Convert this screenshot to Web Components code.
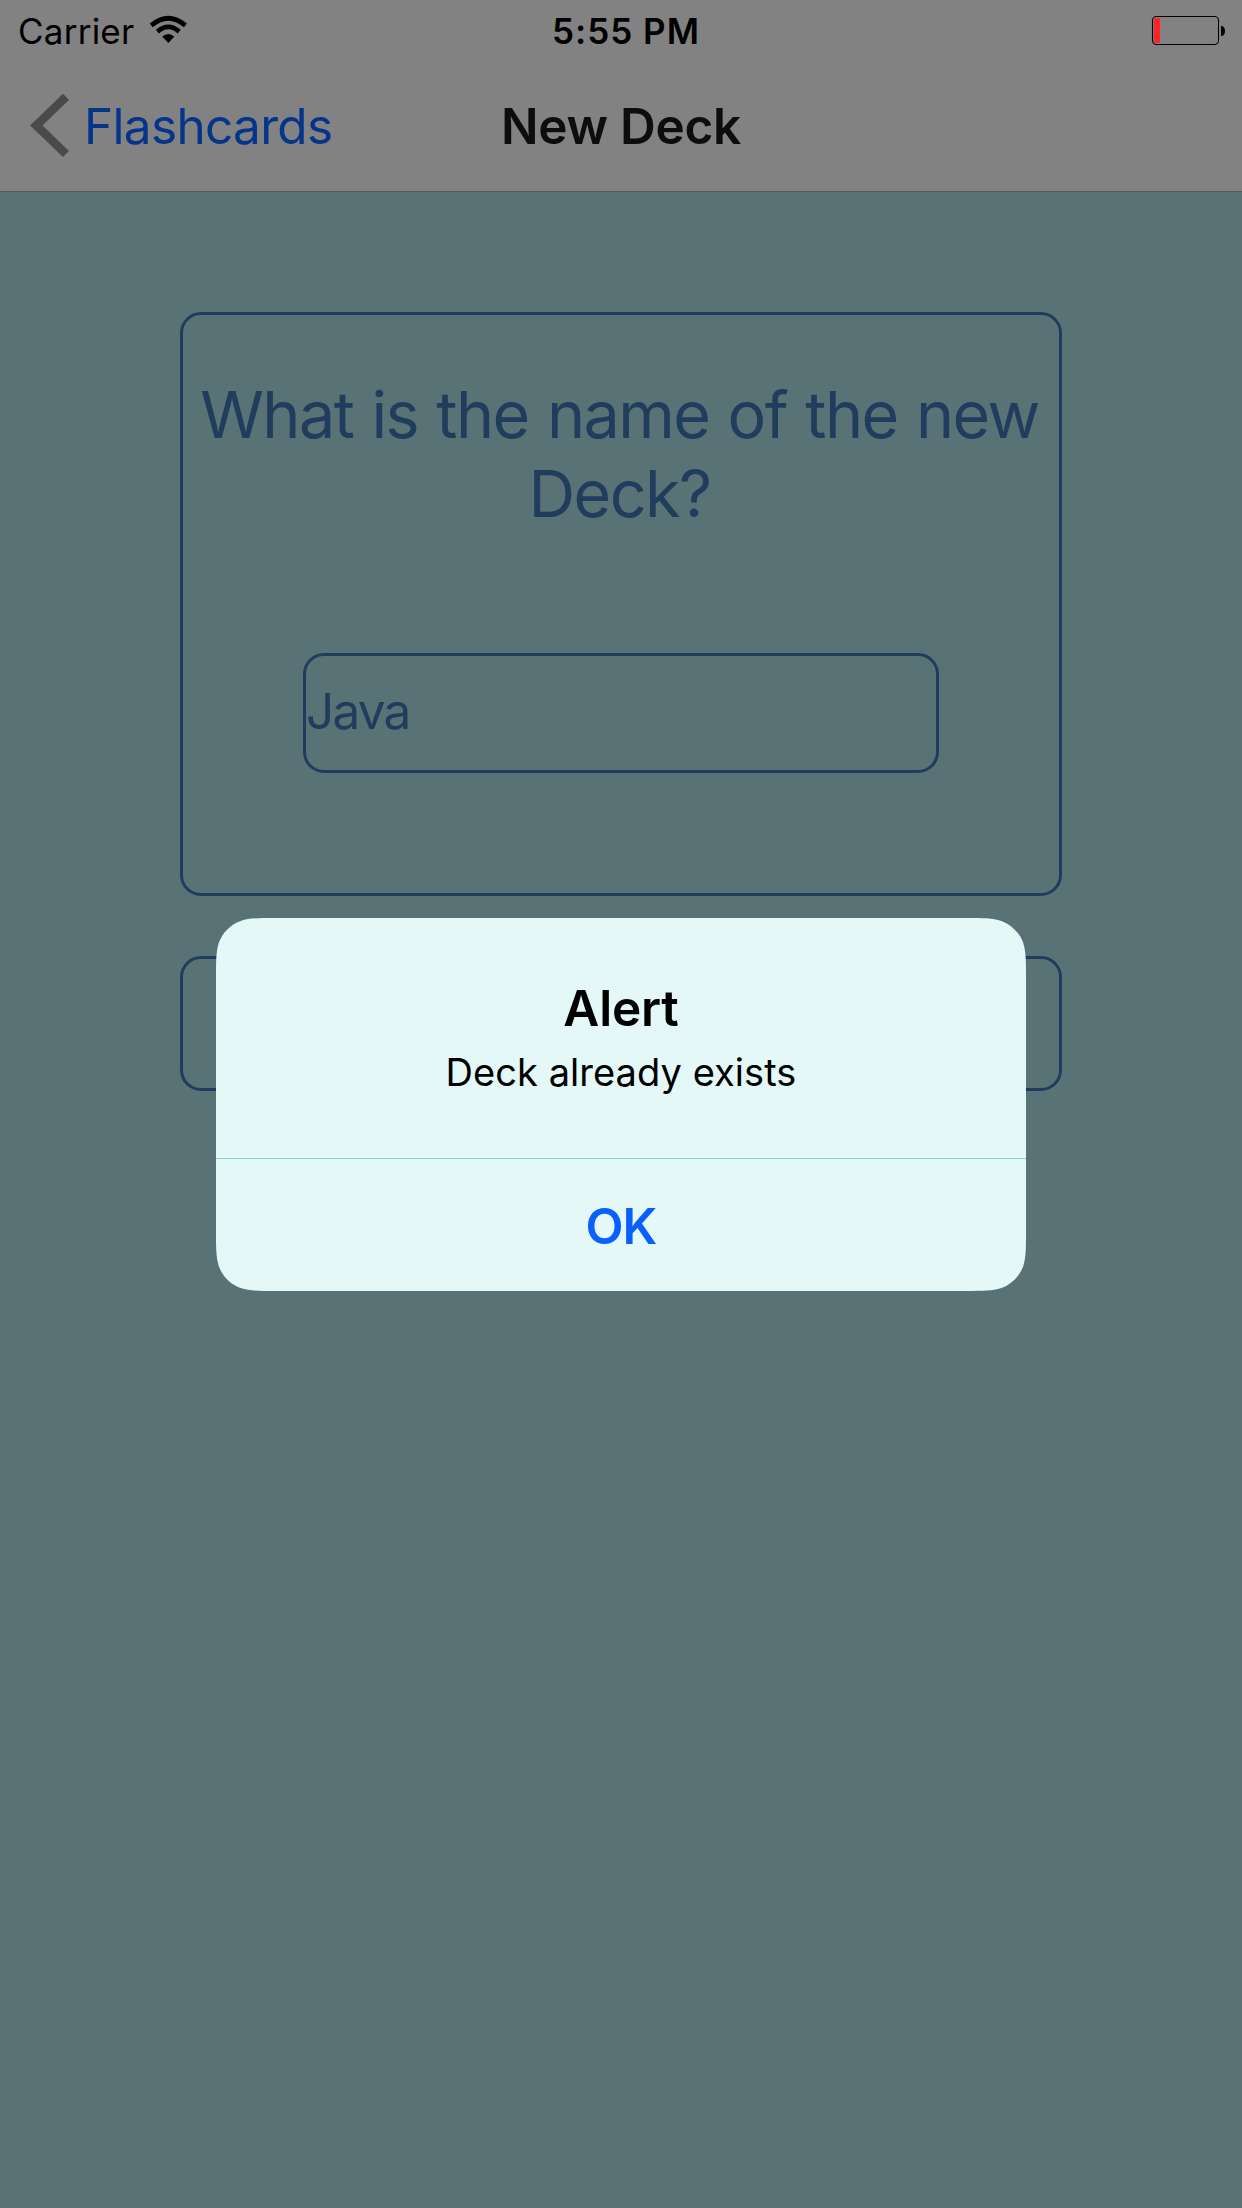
<!DOCTYPE html>
<html lang="en">
<head>
<meta charset="utf-8">
<title>New Deck</title>
<style>
html,body{margin:0;height:100%}
body{font-family:Inter,"Liberation Sans",sans-serif;background:#587276;overflow:hidden}
</style>
</head>
<body>
<flash-app>
  <status-bar slot="top" carrier="Carrier" time="5:55 PM"></status-bar>
  <nav-bar slot="top" back="Flashcards">New Deck</nav-bar>
  <deck-card>What is the name of the new Deck?<deck-input slot="field">Java</deck-input></deck-card>
  <submit-box></submit-box>
  <alert-dialog slot="overlay" heading="Alert" action="OK">Deck already exists</alert-dialog>
</flash-app>
<script>
const define = (name, html) => customElements.define(name, class extends HTMLElement {
  constructor() {
    super();
    const t = document.createElement('template');
    t.innerHTML = html;
    this.attachShadow({mode: 'open'}).append(t.content.cloneNode(true));
  }
  connectedCallback() {
    this.shadowRoot.querySelectorAll('[data-attr]').forEach(n => {
      n.textContent = this.getAttribute(n.dataset.attr) || '';
    });
  }
});

define('flash-app', `<style>
:host{display:flex;flex-direction:column;width:1242px;height:2208px;position:relative;overflow:hidden}
main{display:flex;flex-direction:column;gap:60px;padding:120px 180px 0}
.overlay{position:absolute;inset:0;display:flex;justify-content:center;align-items:flex-start;padding-top:918px;box-sizing:border-box}
</style><slot name="top"></slot><main><slot></slot></main><div class="overlay"><slot name="overlay"></slot></div>`);

define('status-bar', `<style>
:host{display:grid;grid-template-columns:1fr auto 1fr;height:60px;background:#828282;color:#000;font-size:35px;line-height:42px;white-space:nowrap}
.left{display:flex;gap:15px;padding:10px 0 0 18px}
.carrier{letter-spacing:.24px}
.wifi{margin-top:5px}
.time{font-weight:600;letter-spacing:1px;padding:10px 0 0 10px}
.right{display:flex;justify-content:flex-end;padding:15px 16px 0 0}
svg{display:block}
</style>
<div class="left"><span class="carrier" data-attr="carrier"></span>
<svg class="wifi" width="39" height="30" viewBox="0 0 39 30"><g fill="none" stroke="#000" stroke-width="4.7"><path d="M2.2 10.4Q19.3-3.9 36.4 10.4"/><path d="M8.4 16.6Q19.3 7.2 30.2 16.6"/></g><path d="M13.2 21.6Q19.3 16.4 25.4 21.6L19.3 28Z"/></svg></div>
<div class="time" data-attr="time"></div>
<div class="right"><svg width="75" height="32" viewBox="0 0 75 32"><rect x="1.5" y="1.5" width="66" height="28" rx="4" fill="none" stroke="#000" stroke-width="1.1"/><rect x="3" y="3" width="6" height="25" rx=".8" fill="#ff2326"/><path d="M70 11H71Q74 12 74 16T71 21H70Z"/></svg></div>`);

define('nav-bar', `<style>
:host{display:grid;grid-template-columns:1fr auto 1fr;height:132px;box-sizing:border-box;padding-top:32px;background:#828282;border-bottom:1px solid #5a5a5a;font-size:49.5px;line-height:60px;white-space:nowrap}
.back{display:flex;align-items:flex-start;gap:14px;padding-left:30px;color:#05358b;letter-spacing:-.68px}
svg{display:block;width:40px;height:66px}
.label,.title{padding-top:4px}
.title{font-weight:600;letter-spacing:-.28px;color:#0d0d0d}
</style>
<div class="back"><svg viewBox="0 0 40 66"><path d="M36 4.8 6.3 33.4 36 62" fill="none" stroke="#4a4a4a" stroke-width="8.6"/></svg><span class="label" data-attr="back"></span></div>
<div class="title"><slot></slot></div>`);

define('deck-card', `<style>
:host{display:flex;flex-direction:column;height:584px;box-sizing:border-box;border:3px solid #213d5d;border-radius:21px;padding:60px 0 0;color:#213d5d}
.q{font-size:64.6px;line-height:79px;letter-spacing:-1.55px;word-spacing:1.6px;text-align:center;padding-right:3px}
.field{margin:120px 120px 0}
</style><div class="q"><slot></slot></div><div class="field"><slot name="field"></slot></div>`);

define('deck-input', `<style>
:host{display:block;height:120px;box-sizing:border-box;border:3px solid #213d5d;border-radius:21px;padding-top:25px;font-size:49.5px;line-height:60px;letter-spacing:-1.8px}
</style><slot></slot>`);

define('submit-box', `<style>
:host{display:block;height:135px;box-sizing:border-box;border:3px solid #213d5d;border-radius:21px}
</style>`);

define('alert-dialog', `<style>
:host{display:flex;flex-direction:column;width:810px;height:373px;background:#e4f8f7;color:#000;text-align:center;clip-path:path('M59.6 0H750.4C767.5 0 776.1 0 785.4 2.9C795.5 6.6 803.4 14.5 807.1 24.6C810 33.9 810 42.5 810 59.6V313.4C810 330.5 810 339.1 807.1 348.4C803.4 358.5 795.5 366.4 785.4 370.1C776.1 373 767.5 373 750.4 373H59.6C42.5 373 33.9 373 24.6 370.1C14.5 366.4 6.6 358.5 2.9 348.4C0 339.1 0 330.5 0 313.4V59.6C0 42.5 0 33.9 2.9 24.6C6.6 14.5 14.5 6.6 24.6 2.9C33.9 0 42.5 0 59.6 0Z')}
.body{height:240px;box-sizing:border-box;padding-top:60px;display:flex;flex-direction:column;gap:11px}
h2{margin:0;font-size:49.5px;line-height:60px;font-weight:600;letter-spacing:-.2px}
p{margin:0;font-size:38px;line-height:46px;letter-spacing:.057px}
.rule{height:1px;background:#86d2d8}
.ok{padding-top:37px;font-size:49.5px;line-height:60px;font-weight:600;letter-spacing:-1.04px;color:#0a60ff}
</style><div class="body"><h2 data-attr="heading"></h2><p><slot></slot></p></div><div class="rule"></div><div class="ok" data-attr="action"></div>`);
</script>
</body>
</html>
